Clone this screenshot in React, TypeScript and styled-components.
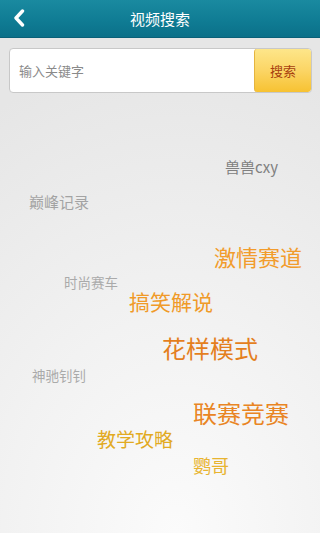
import React from 'react'
import styled, { createGlobalStyle } from 'styled-components'

const GlobalStyle = createGlobalStyle`
  html, body {
    margin: 0;
    padding: 0;
  }
  body {
    font-family: 'Noto Sans CJK SC', 'Noto Sans', sans-serif;
  }
`

type Tag = { text: string; x: number; y: number; size: number; color: string }

const tags: Tag[] = [
  { text: '兽兽cxy', x: 225, y: 66, size: 15, color: '#808080' },
  { text: '巅峰记录', x: 29, y: 101, size: 15, color: '#a3a3a3' },
  { text: '激情赛道', x: 214, y: 152, size: 22, color: '#f29c2c' },
  { text: '时尚赛车', x: 64, y: 183, size: 13.5, color: '#aaaaaa' },
  { text: '搞笑解说', x: 129, y: 198, size: 21, color: '#f09a28' },
  { text: '花样模式', x: 162, y: 243, size: 24, color: '#e47f1e' },
  { text: '神驰钊钊', x: 32, y: 276, size: 13.5, color: '#aaaaaa' },
  { text: '联赛竞赛', x: 193, y: 308, size: 24, color: '#e98524' },
  { text: '教学攻略', x: 97, y: 336, size: 19, color: '#e2aa22' },
  { text: '鹦哥', x: 193, y: 363, size: 18, color: '#e8b430' },
]

const App = () => {
  return (
    <Page>
      <GlobalStyle />
      <TopBar>
        <BackButton aria-label="back">
          <svg width="12" height="18" viewBox="0 0 12 18">
            <path d="M9.5 2 L3 9 L9.5 16" fill="none" stroke="#fff" strokeWidth="3.4" strokeLinecap="round" strokeLinejoin="round" />
          </svg>
        </BackButton>
        <Title>视频搜索</Title>
      </TopBar>
      <SearchRow>
        <SearchBox>
          <SearchInput placeholder="输入关键字" />
          <SearchButton>搜索</SearchButton>
        </SearchBox>
      </SearchRow>
      <Cloud>
        {tags.map((t) => (
          <CloudTag
            key={t.text}
            $color={t.color}
            $size={t.size}
            style={{ left: t.x, top: t.y }}
          >
            {t.text}
          </CloudTag>
        ))}
      </Cloud>
    </Page>
  )
}

const Page = styled.div`
  width: 320px;
  height: 533px;
  display: flex;
  flex-direction: column;
  overflow: hidden;
  background: radial-gradient(ellipse 120% 90% at 55% 100%, #fbfbfb 0%, #f2f2f2 45%, #e6e6e6 100%);
`

const TopBar = styled.div`
  position: relative;
  height: 38px;
  flex-shrink: 0;
  display: flex;
  align-items: center;
  justify-content: center;
  background: linear-gradient(to bottom, #1a8aa0 0%, #0f7b93 60%, #0b7089 100%);
  border-bottom: 1px solid #0a6078;
  box-sizing: border-box;
`

const BackButton = styled.div`
  position: absolute;
  left: 13px;
  top: 9px;
  width: 12px;
  height: 18px;
  display: flex;
`

const Title = styled.div`
  color: #ffffff;
  font-size: 15px;
  line-height: 1;
  margin-top: -1px;
`

const SearchRow = styled.div`
  padding: 10px 8px 0 9px;
  flex-shrink: 0;
`

const SearchBox = styled.div`
  height: 45px;
  display: flex;
  border: 1px solid #c8c8c8;
  border-radius: 4px;
  background: #ffffff;
  box-sizing: border-box;
  overflow: hidden;
`

const SearchInput = styled.input`
  flex: 1;
  min-width: 0;
  border: none;
  outline: none;
  padding: 0 0 0 9px;
  font-family: 'Noto Sans CJK SC', sans-serif;
  font-size: 13px;
  color: #333;
  background: transparent;

  &::placeholder {
    color: #8a8a8a;
  }
`

const SearchButton = styled.div`
  width: 56px;
  display: flex;
  align-items: center;
  justify-content: center;
  border-left: 1px solid #e4b440;
  border-radius: 3px;
  background: linear-gradient(to bottom, #fde68a 0%, #fbd565 50%, #f7c232 100%);
  color: #a8400f;
  font-size: 13px;
`

const Cloud = styled.div`
  position: relative;
  flex: 1;
`

const CloudTag = styled.span<{ $color: string; $size: number }>`
  position: absolute;
  white-space: nowrap;
  line-height: 1;
  color: ${(p) => p.$color};
  font-size: ${(p) => p.$size}px;
`

export default App
